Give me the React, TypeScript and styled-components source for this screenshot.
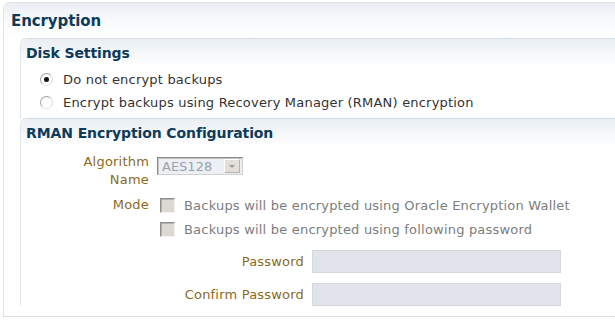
import styled, { createGlobalStyle } from "styled-components";

const GlobalStyle = createGlobalStyle`
  body {
    margin: 0;
    background: #ffffff;
    font-family: "DejaVu Sans", Tahoma, sans-serif;
    font-size: 13px;
    letter-spacing: 0.2px;
    overflow: hidden;
  }
`;

const Panel = styled.div`
  margin: 2px 0 0 3px;
  height: 315px;
  border-left: 1px solid #dde3e9;
  border-top: 1px solid #dde3e9;
  border-bottom: 1px solid #d6dee6;
  border-top-left-radius: 7px;
  box-sizing: border-box;
`;

const PanelHeader = styled.div`
  height: 35px;
  display: flex;
  align-items: center;
  padding-left: 7px;
  border-top-left-radius: 7px;
  background: linear-gradient(#e9eef4, #f7f9fb 45%, #ffffff);
`;

const Title = styled.h2<{ $size: number }>`
  margin: 0;
  font-size: ${(p) => p.$size}px;
  font-weight: bold;
  color: #0e3b5a;
  letter-spacing: -0.1px;
`;

const PanelBody = styled.div`
  padding-left: 16px;
`;

const Section = styled.div`
  border-left: 1px solid #dfe5ea;
  border-top: 1px solid #d3dbe3;
  border-top-left-radius: 6px;
`;

const SectionHeader = styled.div`
  height: 28px;
  display: flex;
  align-items: center;
  padding-left: 5px;
  border-top-left-radius: 6px;
  background: linear-gradient(#eaeff4, #ffffff);
`;

const RadioList = styled.div`
  display: flex;
  flex-direction: column;
  gap: 9px;
  padding: 5px 0 9px 19px;
`;

const RadioRow = styled.label`
  display: flex;
  align-items: center;
  gap: 10px;
  color: #333333;
  height: 14px;
`;

const RadioDot = styled.span<{ $on?: boolean }>`
  width: 11px;
  height: 11px;
  border-radius: 50%;
  border: 1px solid #a0a0a0;
  border-right-color: #d8d8d8;
  border-bottom-color: #e2e2e2;
  background: #ffffff;
  display: flex;
  align-items: center;
  justify-content: center;
  &::after {
    content: "";
    width: 5px;
    height: 5px;
    border-radius: 50%;
    background: ${(p) => (p.$on ? "#111111" : "transparent")};
  }
`;

const FormGrid = styled.div`
  display: grid;
  grid-template-columns: 128px auto;
  column-gap: 8px;
  row-gap: 7px;
  padding-top: 6px;
  align-items: start;
`;

const Label = styled.div`
  color: #8b6a1c;
  text-align: right;
  line-height: 18px;
`;

const Select = styled.div`
  width: 86px;
  height: 18px;
  box-sizing: border-box;
  border: 1px solid #8a8a8a;
  border-right-color: #d0d0d0;
  border-bottom-color: #d0d0d0;
  box-shadow: inset 1px 1px 0 #c4c4c4;
  background: #eceff3;
  display: flex;
  align-items: center;
  justify-content: space-between;
  padding: 0 2px 0 4px;
  margin-top: 4px;
  color: #9aa3ad;
  font-size: 13px;
  letter-spacing: 0;
`;

const SelectButton = styled.span`
  width: 14px;
  height: 12px;
  background: #e2dfd9;
  border: 1px solid #ffffff;
  border-right-color: #b8b4ac;
  border-bottom-color: #b8b4ac;
  display: flex;
  align-items: center;
  justify-content: center;
  &::after {
    content: "";
    border-left: 3px solid transparent;
    border-right: 3px solid transparent;
    border-top: 3px solid #9a9a9a;
  }
`;

const CheckList = styled.div`
  display: flex;
  flex-direction: column;
  gap: 8px;
  padding: 1px 0 0 3px;
`;

const CheckRow = styled.div`
  display: flex;
  align-items: center;
  gap: 9px;
  height: 16px;
  color: #7d7d7d;
`;

const Box = styled.span`
  width: 15px;
  height: 15px;
  box-sizing: border-box;
  background: #dcd9d2;
  border: 1px solid #f4f3f0;
  border-top-color: #8e8e8e;
  border-left-color: #8e8e8e;
  box-shadow: inset 1px 1px 0 #b5b2ab;
`;

const PasswordGrid = styled.div`
  display: grid;
  grid-template-columns: 283px 249px;
  column-gap: 8px;
  row-gap: 10px;
  padding-top: 13px;
  align-items: center;
`;

const Input = styled.div`
  height: 23px;
  box-sizing: border-box;
  background: #e1e5eb;
  border: 1px solid #d3d8de;
`;

export default function App() {
  return (
    <>
      <GlobalStyle />
      <Panel>
        <PanelHeader>
          <Title $size={15}>Encryption</Title>
        </PanelHeader>
        <PanelBody>
          <Section>
            <SectionHeader>
              <Title $size={14}>Disk Settings</Title>
            </SectionHeader>
            <RadioList>
              <RadioRow>
                <RadioDot $on />
                Do not encrypt backups
              </RadioRow>
              <RadioRow>
                <RadioDot />
                Encrypt backups using Recovery Manager (RMAN) encryption
              </RadioRow>
            </RadioList>
          </Section>
          <Section>
            <SectionHeader>
              <Title $size={14}>RMAN Encryption Configuration</Title>
            </SectionHeader>
            <FormGrid>
              <Label>
                Algorithm
                <br />
                Name
              </Label>
              <Select>
                AES128
                <SelectButton />
              </Select>
              <Label>Mode</Label>
              <CheckList>
                <CheckRow>
                  <Box />
                  Backups will be encrypted using Oracle Encryption Wallet
                </CheckRow>
                <CheckRow>
                  <Box />
                  Backups will be encrypted using following password
                </CheckRow>
              </CheckList>
            </FormGrid>
            <PasswordGrid>
              <Label>Password</Label>
              <Input />
              <Label>Confirm Password</Label>
              <Input />
            </PasswordGrid>
          </Section>
        </PanelBody>
      </Panel>
    </>
  );
}
